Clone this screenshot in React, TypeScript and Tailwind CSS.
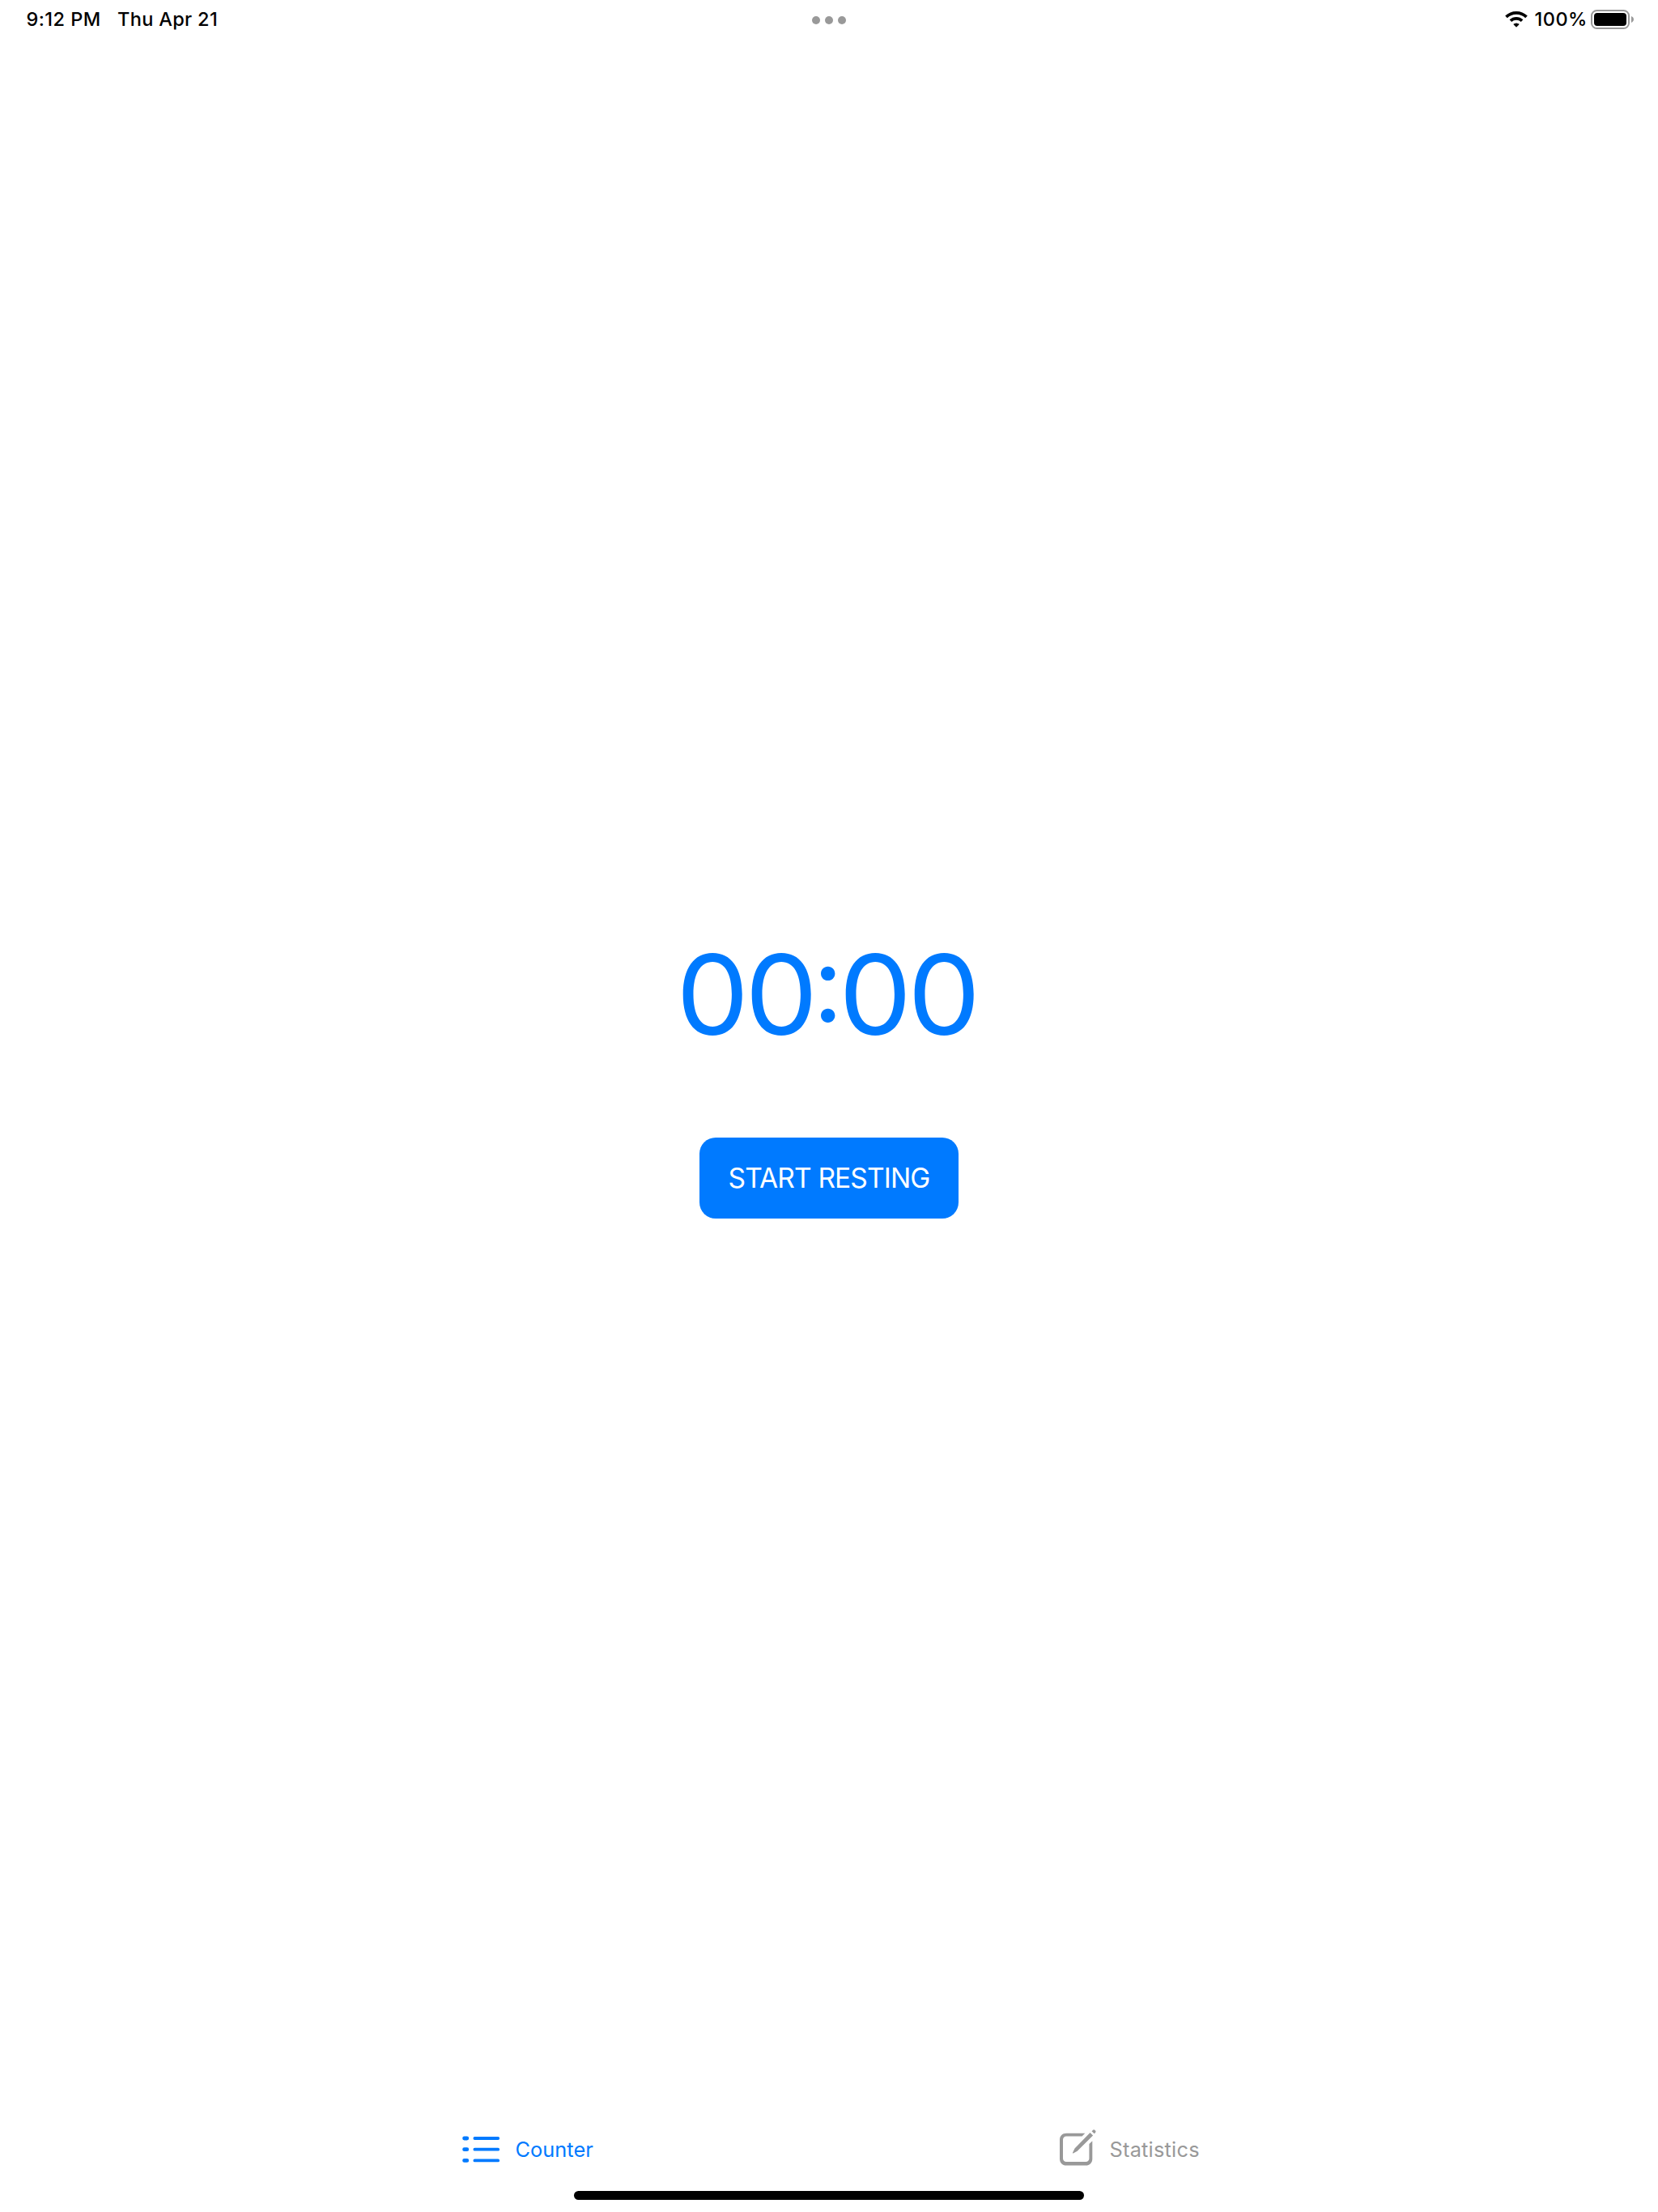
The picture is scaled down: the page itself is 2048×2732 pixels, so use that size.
function StatusBar() {
  return (
    <header className="flex h-[50px] items-start justify-between pl-[32.5px] pr-[29px] text-[23.5px] leading-6 font-medium text-black">
      <div className="flex w-[358.5px] gap-[20.5px] pt-3 whitespace-nowrap">
        <span className="tracking-[0.45px]">9:12 PM</span>
        <span className="tracking-[0.32px]">Thu Apr 21</span>
      </div>
      <div className="flex gap-1.5 pt-5">
        <i className="size-2.5 rounded-full bg-[#999999]" />
        <i className="size-2.5 rounded-full bg-[#999999]" />
        <i className="size-2.5 rounded-full bg-[#999999]" />
      </div>
      <div className="flex w-[362px] justify-end whitespace-nowrap">
        <svg className="mt-[13px] mr-[8px] h-[22px] w-[29px]" viewBox="0 0 29 22" fill="none" stroke="black" strokeWidth="3.7">
          <path d="M1.500 7.900a18 18 0 0 1 25 0" />
          <path d="M6.900 12.700a10.200 10.200 0 0 1 14.200 0" />
          <path d="M14 20.200l-3.200-3.100a5.500 5.500 0 0 1 6.400 0z" fill="black" strokeWidth="1" strokeLinejoin="round" />
        </svg>
        <span className="w-[69.5px] pt-3 tracking-[0.5px]">100%</span>
        <span className="mt-3 h-6 w-12 rounded-[7.5px] border-2 border-[#999999] p-0.5">
          <span className="block h-4 w-10 rounded-[4px] bg-black" />
        </span>
        <svg className="mt-5 ml-0.5 h-2 w-1" viewBox="0 0 4 8">
          <path d="M0 0c1.800.8 3 2.200 3 4s-1.200 3.200-3 4z" fill="#999999" />
        </svg>
      </div>
    </header>
  );
}

function ListIcon() {
  return (
    <svg className="h-[34px] w-12" viewBox="0 0 48 34" fill="none" stroke="#007aff" strokeLinecap="round">
      <path strokeWidth="4.800" d="M2.600 3h3.200M2.600 16.700h3.200M2.600 30.400h3.200" />
      <path strokeWidth="3.800" d="M15.400 3h28.800M15.400 16.700h28.800M15.400 30.400h28.800" />
    </svg>
  );
}

function ComposeIcon() {
  return (
    <svg className="h-[46px] w-[46px]" viewBox="0 0 46 46" fill="none">
      <path
        d="M31.300 4.700L27.500 8.600H8.200C5.700 8.600 4 10.300 4 12.800v23c0 2.500 1.700 4.200 4.200 4.200h24c2.500 0 4.200-1.700 4.200-4.200V18.100l3.900-3.900v22c0 5.100-3.200 8.300-8.300 8.300H8.300C3.200 44.500 0 41.300 0 36.200V13C0 7.900 3.200 4.700 8.300 4.700z"
        fill="#999999"
      />
      <path d="M37.500 4l3.600 3.600-19.400 19.200-5 2.700c-.5.200-1-.3-.7-.8l2.500-5.300zM39.500 2.300l1.400-1.400c.8-.8 1.800-.8 2.600 0l.5.500c.7.700.7 1.700 0 2.500l-1.300 1.400z" fill="#999999" />
    </svg>
  );
}

function Digit() {
  return <span className="inline-block scale-x-[1.04]">0</span>;
}

export default function App() {
  return (
    <div className="flex h-[2732px] w-[2048px] flex-col bg-white font-['Inter',sans-serif]">
      <StatusBar />
      <main className="flex flex-1 flex-col items-center pt-[1108px]">
        <div className="flex h-[140px] pr-[3px] text-[137px] leading-[140px] tracking-[-1.300px] whitespace-nowrap text-[#007aff]">
          <Digit />
          <Digit />
          <span className="mx-[-3.900px] inline-block -translate-y-[14px] scale-[0.96]">:</span>
          <Digit />
          <Digit />
        </div>
        <button className="mt-[107px] h-[100px] w-[320px] rounded-[20px] bg-[#007aff] text-[33.5px] leading-[100px] tracking-[-0.86px] whitespace-nowrap text-white">
          START RESTING
        </button>
      </main>
      <nav className="flex h-20 pl-[571px] text-[25.3px] leading-8">
        <a className="flex w-[738px] text-[#007aff]">
          <span className="mt-[12px] w-[65.5px]">
            <ListIcon />
          </span>
          <span className="mt-[13px] tracking-[0.07px]">Counter</span>
        </a>
        <a className="flex text-[#999999]">
          <span className="mt-1 w-[61.5px]">
            <ComposeIcon />
          </span>
          <span className="mt-[13px] tracking-[0.25px]">Statistics</span>
        </a>
      </nav>
      <footer className="flex h-[26px] justify-center">
        <div className="h-[11px] w-[630px] rounded-full bg-black" />
      </footer>
    </div>
  );
}
